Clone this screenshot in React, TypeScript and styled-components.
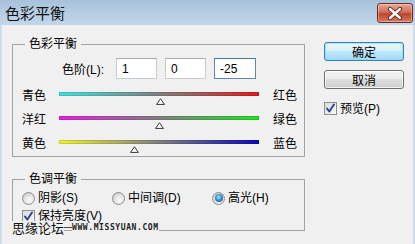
import React from "react";
import styled, { createGlobalStyle } from "styled-components";

const GlobalStyle = createGlobalStyle`
  html, body { margin: 0; padding: 0; background: #f0f0f0; }
  body {
    font-family: "Liberation Sans", "Noto Sans CJK SC", sans-serif;
    font-size: 12px;
    color: #000;
  }
  * { box-sizing: border-box; }
`;

const Window = styled.div`
  position: relative;
  width: 415px;
  height: 244px;
  overflow: hidden;
  display: flex;
  flex-direction: column;
  background: #f0f0f0;
`;

const TitleBar = styled.div`
  height: 25px;
  flex: none;
  display: flex;
  align-items: center;
  justify-content: space-between;
  padding: 0 2px 0 5px;
  background: linear-gradient(#a8c2db, #c3d6e9);
`;

const Title = styled.div`
  font-family: "Noto Sans CJK SC", sans-serif;
  font-size: 15px;
  line-height: 1;
  color: #111;
`;

const CloseButton = styled.div`
  width: 36px;
  height: 20px;
  margin-top: 1px;
  border: 1px solid #6e2a1f;
  border-radius: 3px;
  display: flex;
  align-items: center;
  justify-content: center;
  background: linear-gradient(#e6a794 0%, #d26e58 45%, #c0452c 55%, #d67a62 100%);
  box-shadow: inset 0 0 0 1px rgba(255, 255, 255, 0.35);
`;

const Body = styled.div`
  flex: 1;
  display: flex;
  gap: 19px;
  padding: 11px 0 0 10px;
  border-left: 2px solid #cddcec;
  border-right: 2px solid #cddcec;
`;

const LeftColumn = styled.div`
  width: 293px;
  display: flex;
  flex-direction: column;
`;

const GroupBox = styled.fieldset<{ $top?: number; $bottom?: number; $gapBefore?: number }>`
  margin: ${(p) => p.$gapBefore ?? 0}px 0 0 0;
  padding: ${(p) => p.$top ?? 0}px 0 ${(p) => p.$bottom ?? 0}px 0;
  border: 1px solid #a3a3a3;
  min-width: 0;
`;

const Legend = styled.legend`
  margin-left: 12px;
  padding: 0 4px;
  line-height: 16px;
  font-size: 12px;
`;

const LevelsRow = styled.div`
  display: flex;
  align-items: center;
  gap: 8px;
  height: 21px;
  padding-left: 49px;
`;

const LevelsLabel = styled.span`
  width: 46px;
  white-space: nowrap;
`;

const NumberInput = styled.input<{ $focused?: boolean; $w: number }>`
  width: ${(p) => p.$w}px;
  height: 21px;
  padding: 0 5px;
  font-family: "Liberation Sans", sans-serif;
  font-size: 12px;
  color: #000;
  background: #fff;
  outline: none;
  border: 1px solid ${(p) => (p.$focused ? "#5d87b5" : "#c5cbd3")};
  border-top-color: ${(p) => (p.$focused ? "#4b77a8" : "#abadb3")};
`;

const SliderList = styled.div`
  display: flex;
  flex-direction: column;
  margin-top: 5px;
`;

const SliderRow = styled.div`
  display: flex;
  align-items: center;
  height: 24px;
  padding-left: 9px;
`;

const SideLabel = styled.span`
  width: 37px;
  line-height: 16px;
`;

const RightLabel = styled.span`
  margin-left: 14px;
  line-height: 16px;
`;

const Track = styled.div`
  position: relative;
  width: 200px;
  height: 16px;
  display: flex;
  flex-direction: column;
`;

const Bar = styled.div<{ $from: string; $to: string }>`
  margin-top: 4px;
  height: 4px;
  background: linear-gradient(to right, ${(p) => p.$from}, #808080 50%, ${(p) => p.$to});
  box-shadow: inset 0 0 0 1px rgba(0, 0, 0, 0.12);
`;

const Thumb = styled.svg`
  position: absolute;
  top: 10px;
  width: 9px;
  height: 7px;
`;

const RadioRow = styled.div`
  display: grid;
  grid-template-columns: 90px 100px auto;
  align-items: center;
  height: 18px;
  padding-left: 9px;
`;

const CheckRow = styled.div`
  display: flex;
  align-items: center;
  height: 18px;
  padding-left: 9px;
`;

const Option = styled.label`
  display: flex;
  align-items: center;
  gap: 3px;
  line-height: 16px;
  white-space: nowrap;
`;

const RadioCircle = styled.span<{ $checked?: boolean }>`
  width: 13px;
  height: 13px;
  border-radius: 50%;
  border: 1px solid #8c8f93;
  background: radial-gradient(circle at 60% 65%, #fbfbfb 0%, #e6e6e6 45%, #bdbdbd 100%);
  display: flex;
  align-items: center;
  justify-content: center;
  &::after {
    content: "";
    display: ${(p) => (p.$checked ? "block" : "none")};
    width: 8px;
    height: 8px;
    border-radius: 50%;
    background: radial-gradient(circle at 45% 40%, #b6ecff 0%, #3a9bd8 40%, #0c3a63 100%);
  }
`;

const CheckBox = styled.span`
  width: 13px;
  height: 13px;
  border: 1px solid #8e8f8f;
  background: linear-gradient(135deg, #d6dbe4, #f7f8fa);
  display: flex;
  align-items: center;
  justify-content: center;
`;

const RightColumn = styled.div`
  width: 80px;
  display: flex;
  flex-direction: column;
  padding-top: 6px;
`;

const Button = styled.div<{ $primary?: boolean }>`
  height: 19px;
  border-radius: 3px;
  display: flex;
  align-items: center;
  justify-content: center;
  font-size: 12px;
  border: 1px solid ${(p) => (p.$primary ? "#3c7fb1" : "#707070")};
  background: ${(p) =>
    p.$primary
      ? "linear-gradient(#eaf6fd 0%, #d9f0fc 45%, #bee6fd 50%, #a7d9f5 100%)"
      : "linear-gradient(#f2f2f2 0%, #ebebeb 45%, #dddddd 50%, #cfcfcf 100%)"};
  box-shadow: inset 0 0 0 1px ${(p) => (p.$primary ? "rgba(120,220,255,0.6)" : "rgba(255,255,255,0.7)")};
  & + & {
    margin-top: 9px;
  }
`;

const PreviewRow = styled.div`
  margin-top: 12px;
  height: 15px;
  display: flex;
  align-items: center;
`;

const Watermark = styled.div`
  position: absolute;
  left: 12px;
  top: 221px;
  display: flex;
  align-items: center;
`;

const WatermarkName = styled.span`
  font-family: "Noto Sans CJK SC", sans-serif;
  font-size: 13px;
  line-height: 13px;
  color: #111;
  background: #f0f0f0;
`;

const WatermarkDash = styled.span`
  width: 8px;
  height: 1px;
  background: #444;
`;

const WatermarkUrl = styled.span`
  font-family: "DejaVu Sans Mono", monospace;
  font-weight: bold;
  font-size: 8px;
  letter-spacing: 0.6px;
  text-transform: uppercase;
  color: #222;
  background: #f0f0f0;
  line-height: 10px;
`;

const CheckMark = () => (
  <svg width="11" height="11" viewBox="0 0 11 11">
    <path d="M2 5.5 L4.3 8.5 L9 1.5" fill="none" stroke="#2c4a86" strokeWidth="2" strokeLinecap="round" strokeLinejoin="round" />
  </svg>
);

const sliders = [
  { left: "青色", right: "红色", from: "#3fe0e0", to: "#dd1c1c", value: 1 },
  { left: "洋红", right: "绿色", from: "#e020e0", to: "#22e022", value: 0 },
  { left: "黄色", right: "蓝色", from: "#f0f030", to: "#0a0ab8", value: -25 },
];

export default function App() {
  return (
    <>
      <GlobalStyle />
      <Window>
        <TitleBar>
          <Title>色彩平衡</Title>
          <CloseButton>
            <svg width="16" height="13" viewBox="0 0 16 13">
              <path d="M3 2 L13 11 M13 2 L3 11" stroke="#5a2218" strokeWidth="4.2" strokeLinecap="round" />
              <path d="M3 2 L13 11 M13 2 L3 11" stroke="#ffffff" strokeWidth="2.4" strokeLinecap="round" />
            </svg>
          </CloseButton>
        </TitleBar>
        <Body>
          <LeftColumn>
            <GroupBox $top={6} $bottom={0}>
              <Legend>色彩平衡</Legend>
              <LevelsRow>
                <LevelsLabel>色阶(L):</LevelsLabel>
                <NumberInput $w={41} defaultValue="1" />
                <NumberInput $w={41} defaultValue="0" />
                <NumberInput $w={42} $focused defaultValue="-25" />
              </LevelsRow>
              <SliderList>
                {sliders.map((s) => (
                  <SliderRow key={s.left}>
                    <SideLabel>{s.left}</SideLabel>
                    <Track>
                      <Bar $from={s.from} $to={s.to} />
                      <Thumb viewBox="0 0 9 7" style={{ left: `${s.value + 100 - 4}px` }}>
                        <path d="M4.5 0.8 L8.4 6.4 L0.6 6.4 Z" fill="#fff" stroke="#333" strokeWidth="1" strokeLinejoin="round" />
                      </Thumb>
                    </Track>
                    <RightLabel>{s.right}</RightLabel>
                  </SliderRow>
                ))}
              </SliderList>
            </GroupBox>
            <GroupBox $gapBefore={14} $top={2} $bottom={5}>
              <Legend>色调平衡</Legend>
              <RadioRow>
                <Option>
                  <RadioCircle />
                  阴影(S)
                </Option>
                <Option>
                  <RadioCircle />
                  中间调(D)
                </Option>
                <Option>
                  <RadioCircle $checked />
                  高光(H)
                </Option>
              </RadioRow>
              <CheckRow>
                <Option>
                  <CheckBox>
                    <CheckMark />
                  </CheckBox>
                  保持亮度(V)
                </Option>
              </CheckRow>
            </GroupBox>
          </LeftColumn>
          <RightColumn>
            <Button $primary>确定</Button>
            <Button>取消</Button>
            <PreviewRow>
              <Option>
                <CheckBox>
                  <CheckMark />
                </CheckBox>
                预览(P)
              </Option>
            </PreviewRow>
          </RightColumn>
        </Body>
        <Watermark>
          <WatermarkName>思缘论坛</WatermarkName>
          <WatermarkDash />
          <WatermarkUrl>www.missyuan.com</WatermarkUrl>
        </Watermark>
      </Window>
    </>
  );
}
